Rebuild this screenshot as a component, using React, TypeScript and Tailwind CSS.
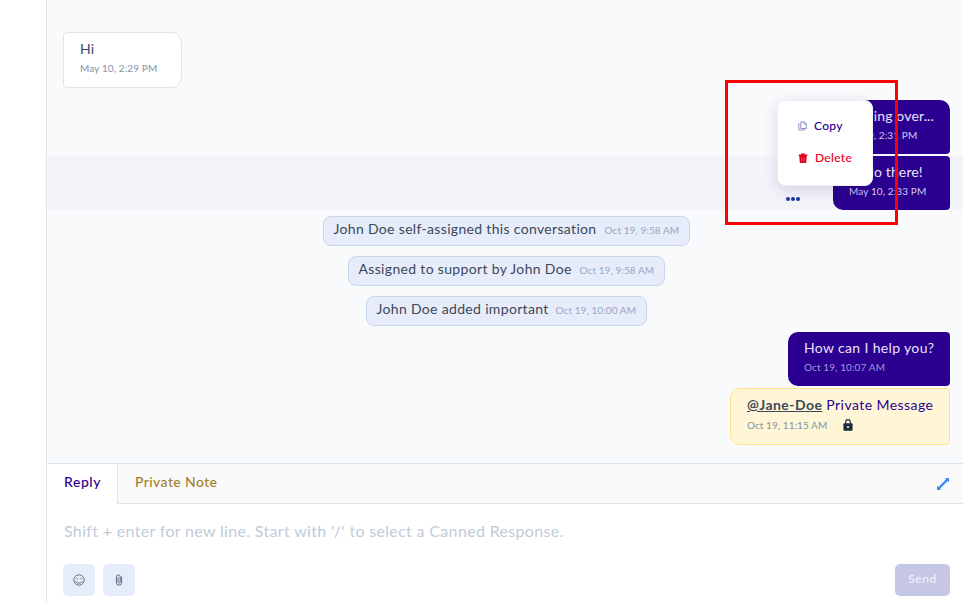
import type { ReactNode } from 'react';

type BubbleProps = { children: ReactNode; time: string; className: string; textClass: string; timeClass: string };

function Bubble({ children, time, className, textClass, timeClass }: BubbleProps) {
  return (
    <div className={`flex flex-col pl-4 ${className}`}>
      <div className={`text-[14px] leading-[21px] whitespace-nowrap ${textClass}`}>{children}</div>
      <div className={`text-[10px] leading-[18px] whitespace-nowrap tracking-[0.11px] ${timeClass}`}>{time}</div>
    </div>
  );
}

function Activity({ text, time, className, textClass }: { text: string; time: string; className: string; textClass: string }) {
  return (
    <div className={`flex h-[30px] rounded-lg border border-[#c8d6ec] bg-[#e6ecfa] pl-2.5 ${className}`}>
      <span className={`shrink-0 text-[14px] leading-[23px] whitespace-nowrap text-[#3c4858] tracking-[0.33px] ${textClass}`}>{text}</span>
      <span className="text-[10px] leading-[27px] whitespace-nowrap tracking-[0.08px] text-[#9aa6c2]">{time}</span>
    </div>
  );
}

function CopyIcon() {
  return (
    <svg width="10" height="10" viewBox="0 0 10 10" fill="none" stroke="#8d91c9" strokeWidth="1">
      <path d="M2.8 .9H6.3L8.3 2.7V7.5H2.8ZM6 1V3H8.3M.8 2.2V9H6.6V7.6" />
    </svg>
  );
}

function TrashIcon() {
  return (
    <svg width="10" height="10" viewBox="0 0 10 10" fill="#e0001b">
      <path d="M3.2 .6H6.8V1.5H9.3V3H.7V1.5H3.2ZM1.3 3H8.7L8.2 10H1.8Z" />
      <path d="M3.9 4.4V8.6M6.1 4.4V8.6" stroke="#fff" strokeWidth=".6" opacity=".5" />
    </svg>
  );
}

function LockIcon() {
  return (
    <svg width="10" height="12" viewBox="0 0 10 12">
      <path d="M2.7 5V3a2.3 2.3 0 0 1 4.6 0v2" fill="none" stroke="#1f2d3d" strokeWidth="1.2" />
      <rect x=".4" y="4.3" width="9.2" height="7.4" rx="1" fill="#1f2d3d" />
      <circle cx="5" cy="8" r="1" fill="#fff6d8" />
    </svg>
  );
}

function ExpandIcon() {
  return (
    <svg width="12" height="12" viewBox="0 0 12 12" fill="#3b8bff">
      <path d="M7.8 0H12V4.2L10.7 2.9 2.9 10.7 4.2 12H0V7.8L1.3 9.1 9.1 1.3Z" />
    </svg>
  );
}

function SmileIcon() {
  return (
    <svg width="12" height="12" viewBox="0 0 12 12" fill="none" stroke="#5b6880" strokeWidth=".9">
      <circle cx="6" cy="6" r="5.2" />
      <path d="M3.2 4.7h1.6M7.2 4.7h1.6M2.4 6.9c.8 3 6.4 3 7.2 0" />
    </svg>
  );
}

function ClipIcon() {
  return (
    <svg width="8" height="12" viewBox="0 0 8 12" fill="none" stroke="#5b6880" strokeWidth="1">
      <path d="M6.6 2.6V8.6a2.6 2.6 0 0 1-5.2 0V2.8a1.9 1.9 0 0 1 3.8 0V8.2a1.1 1.1 0 0 1-2.1 0V3.2" />
    </svg>
  );
}

export default function App() {
  return (
    <div className="relative flex h-[603px] w-[963px] overflow-hidden bg-white font-['Lato',sans-serif]">
      <aside className="w-[47px] shrink-0 border-r border-[#e0e6ed]" />
      <main className="flex min-w-0 flex-1 flex-col">
        <section className="flex h-[463px] shrink-0 flex-col bg-[#f9fafc] pt-8">
          <Bubble
            time="May 10, 2:29 PM"
            className="ml-4 h-14 w-[119px] rounded-[4px] rounded-r-[10px] border border-[#e0e6ed] bg-white pt-[5px]"
            textClass="text-[#3c4858] tracking-[0.2px]"
            timeClass="text-[#8492a6]"
          >
            Hi
          </Bubble>
          <div className="mt-3 flex justify-end pr-[13px]">
            <Bubble
              time="May 10, 2:31 PM"
              className="h-[54px] w-[126px] rounded-[4px] rounded-l-[10px] rounded-tr-[10px] bg-[#2b0090] pt-[5px]"
              textClass="text-[#e7e4fa] tracking-[0.15px]"
              timeClass="text-[#d0ccef]"
            >
              Handing over...
            </Bubble>
          </div>
          <div className="mt-0.5 flex justify-end bg-[#f3f4fa] pr-[13px]">
            <Bubble
              time="May 10, 2:33 PM"
              className="h-[54px] w-[117px] rounded-[4px] rounded-l-[10px] bg-[#2b0090] pt-[5px]"
              textClass="text-[#e7e4fa] tracking-[0.13px]"
              timeClass="text-[#d0ccef]"
            >
              Hello there!
            </Bubble>
          </div>
          <div className="mt-1.5 flex flex-col items-center gap-2.5 pl-0.5">
            <Activity text="John Doe self-assigned this conversation" time="Oct 19, 9:58 AM" className="w-[367px]" textClass="w-[271px]" />
            <Activity text="Assigned to support by John Doe" time="Oct 19, 9:58 AM" className="w-[317px]" textClass="w-[221px]" />
            <Activity text="John Doe added important" time="Oct 19, 10:00 AM" className="w-[281px]" textClass="w-[179px]" />
          </div>
          <div className="mt-1.5 flex flex-col items-end gap-0.5 pr-[13px]">
            <Bubble
              time="Oct 19, 10:07 AM"
              className="h-[54px] w-[162px] rounded-[4px] rounded-l-[10px] bg-[#2b0090] pt-[5px]"
              textClass="text-[#e7e4fa] tracking-[0.35px]"
              timeClass="text-[#9f9bd0]"
            >
              How can I help you?
            </Bubble>
            <div className="flex h-[57px] w-[220px] flex-col rounded-[4px] rounded-l-[10px] border border-[#ffe28a] bg-[#fff6d8] pt-[5px] pl-4">
              <div className="text-[14px] leading-[21px] tracking-[0.44px] whitespace-nowrap text-[#2b0090]">
                <span className="font-bold text-[#3c4858] underline">@Jane-Doe</span> Private Message
              </div>
              <div className="flex items-center pt-px">
                <span className="w-24 text-[10px] leading-[18px] tracking-[0.06px] text-[#8492a6]">Oct 19, 11:15 AM</span>
                <LockIcon />
              </div>
            </div>
          </div>
        </section>
        <section className="flex flex-1 flex-col border-t border-[#e0e6f0]">
          <div className="flex h-10 bg-[#fafafa] text-[14px] leading-[36px] font-medium">
            <div className="w-[71px] border-r border-[#e0e6f0] bg-white pl-[17px] tracking-[0.55px] text-[#2b0090]">Reply</div>
            <div className="flex flex-1 items-center justify-between border-b border-[#e0e6f0] pr-3.5 pl-[17px]">
              <span className="self-start tracking-[0.4px] text-[#a1812a]">Private Note</span>
              <ExpandIcon />
            </div>
          </div>
          <div className="h-[60px] pt-[14px] pl-[17px] text-[16px] leading-[26px] tracking-[0.33px] whitespace-nowrap text-[#c0ccda]">
            Shift + enter for new line. Start with '/' to select a Canned Response.
          </div>
          <div className="flex gap-2 pr-[13px] pl-4">
            <button className="flex size-8 items-center justify-center rounded-[5px] bg-[#e6ecfa]"><SmileIcon /></button>
            <button className="flex size-8 items-center justify-center rounded-[5px] bg-[#e6ecfa]"><ClipIcon /></button>
            <button className="ml-auto h-8 w-[55px] rounded-[5px] bg-[#c5c7e5] pb-0.5 text-[12px] font-medium tracking-[0.6px] text-[#f0f1fb]">Send</button>
          </div>
        </section>
      </main>

      <div className="absolute top-[197px] left-[786px] flex gap-[1px]">
        <i className="size-1 rounded-full bg-[#1a36a0]" />
        <i className="size-1 rounded-full bg-[#1a36a0]" />
        <i className="size-1 rounded-full bg-[#1a36a0]" />
      </div>
      <div className="absolute top-[100px] left-[777px] flex h-[86px] w-[96px] flex-col rounded-lg border border-[#eef1f6] bg-white pt-[9px] pl-5 text-[12px] leading-8 font-medium shadow-[0_4px_14px_rgba(40,40,90,0.16)]">
        <div className="flex items-center gap-[6px] tracking-[0.3px] text-[#2b0090]"><CopyIcon />Copy</div>
        <div className="flex items-center gap-[7px] tracking-[0.3px] text-[#e0001b]"><TrashIcon />Delete</div>
      </div>
      <div className="absolute top-20 left-[725px] h-[145px] w-[173px] border-[3px] border-[#ff0000]" />
    </div>
  );
}
